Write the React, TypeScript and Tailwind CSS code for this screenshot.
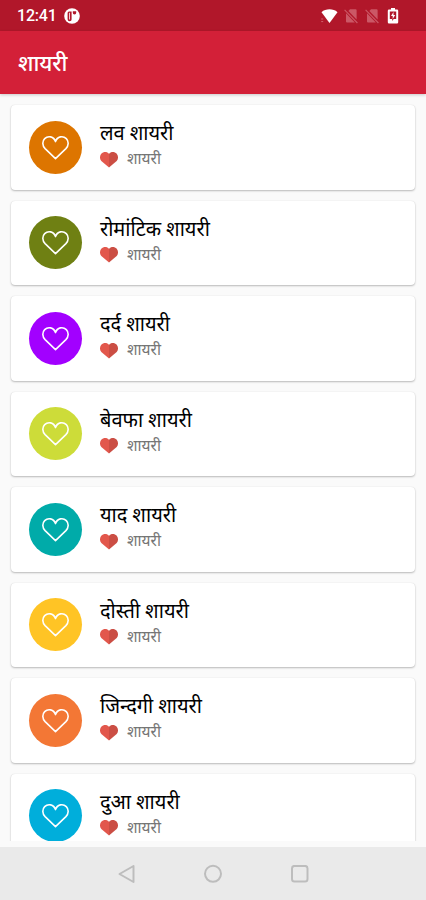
type Category = {
  id: number;
  name: string;
  color: string;
};

const CATEGORIES: Category[] = [
  { id: 1, name: "लव शायरी", color: "bg-[#dd7500]" },
  { id: 2, name: "रोमांटिक शायरी", color: "bg-[#6f8013]" },
  { id: 3, name: "दर्द शायरी", color: "bg-[#a200ff]" },
  { id: 4, name: "बेवफा शायरी", color: "bg-[#cddc39]" },
  { id: 5, name: "याद शायरी", color: "bg-[#00aba9]" },
  { id: 6, name: "दोस्ती शायरी", color: "bg-[#ffc425]" },
  { id: 7, name: "जिन्दगी शायरी", color: "bg-[#f37735]" },
  { id: 8, name: "दुआ शायरी", color: "bg-[#00aedb]" },
];

function HeartOutline() {
  return (
    <svg width="27" height="25" viewBox="0 0 27 25" fill="none" aria-hidden="true">
      <path
        d="M13.5 23.6 3.1 13.6C.2 10.6.1 6.3 2.7 3.6 5.9.4 11.8 1.2 13.5 6.6 15.2 1.2 21.1.4 24.3 3.6c2.6 2.7 2.5 7-.4 10L13.5 23.6Z"
        stroke="white"
        strokeWidth="1.6"
        strokeLinejoin="round"
      />
    </svg>
  );
}

function RedHeart() {
  return (
    <svg width="18" height="16" viewBox="0 0 18 16" aria-hidden="true">
      <path d="M9 15.6 1.3 9C-.5 7-.4 3.5 1.3 1.7 3.6-.6 7.3-.4 9 2Z" fill="#e2574c" />
      <path d="m9 15.6 7.7-6.6c1.8-2 1.7-5.5 0-7.3C14.4-.6 10.7-.4 9 2Z" fill="#cb4e44" />
    </svg>
  );
}

function NoSim() {
  return (
    <svg width="14" height="16" viewBox="0 0 14 16" aria-hidden="true">
      <path d="M6 1.2H11.6q1 0 1 1v9.2L4.4 3Z" fill="#cb5866" />
      <path d="M2 5.2 10.8 14.6H3q-1 0-1-1Z" fill="#cb5866" />
      <path d="m.6 1.9 12.8 13.1" stroke="#cb5866" strokeWidth="1.1" />
    </svg>
  );
}

function StatusBar() {
  return (
    <div className="flex h-[31px] shrink-0 items-center bg-[#b1172a] pl-[17px] pr-[27px] text-white">
      <span className="w-[47px] text-[16px] font-medium leading-none tracking-[-0.2px]">12:41</span>
      <svg width="16" height="16" viewBox="0 0 16 16" aria-hidden="true">
        <circle cx="8" cy="8" r="7.8" fill="white" />
        <path d="M3.6 5Q3.6 3.4 5 3.4h2.6v8.2q0 1.6-1.8 1.6-2.2 0-2.2-2Z" fill="#b1172a" />
        <path d="M5.2 4.8h.8v6.8h-.8Z" fill="white" />
        <path d="M8.8 3.3h3.4v1.5a1.7 1.7 0 0 1-3.4 0Z" fill="#b1172a" />
      </svg>
      <div className="ml-auto flex items-center">
        <svg className="mr-[6px]" width="18" height="16" viewBox="0 0 18 16" aria-hidden="true">
          <path d="M1.5 4.2C5.7.4 13.3.4 17.5 4.2L9.5 15Z" fill="white" />
          <path d="M1.2 11h2M1.2 13.6h2" stroke="#d0606e" strokeWidth="1" />
        </svg>
        <NoSim />
        <span className="w-[7px]" />
        <NoSim />
        <svg className="ml-[8px]" width="12" height="16" viewBox="0 0 12 16" aria-hidden="true">
          <path d="M4 0h4v1.5h2q1.2 0 1.2 1.2v11.6q0 1.3-1.2 1.3H2q-1.2 0-1.2-1.3V2.7Q.8 1.5 2 1.5h2Z" fill="white" />
          <path d="M2.8 3.5h6.4V11H2.8Z" fill="#b1172a" />
          <path d="M6.5 4 4 8h1.7v3L8.2 7H6.5Z" fill="white" />
          <path d="m5.2 11 1.5 0-1.5 2Z" fill="#b1172a" />
        </svg>
      </div>
    </div>
  );
}

function CategoryCard({ category }: { category: Category }) {
  return (
    <li className="flex h-[84.5px] shrink-0 items-center rounded-[4px] bg-white pb-[0.5px] pl-[18px] shadow-[0_1px_2px_rgba(0,0,0,0.25),0_0_1px_rgba(0,0,0,0.12)]">
      <div className={`flex size-[53px] shrink-0 items-center justify-center rounded-full ${category.color}`}>
        <HeartOutline />
      </div>
      <div className="ml-[18px] h-full pt-[12px]">
        <p className="h-[33px] whitespace-nowrap text-[20px] leading-[32px] text-black">{category.name}</p>
        <div className="flex h-[18px] items-start gap-[9px]">
          <span className="pt-[1.5px]">
            <RedHeart />
          </span>
          <span className="whitespace-nowrap text-[15.5px] leading-[18px] text-[#757575]">शायरी</span>
        </div>
      </div>
    </li>
  );
}

function NavigationBar() {
  return (
    <nav className="flex h-[53px] shrink-0 items-center justify-center gap-[68px] bg-[#eaeaea]">
      <svg width="18" height="20" viewBox="0 0 18 20" fill="none" aria-hidden="true">
        <path d="M16.5 2v16L2.5 10Z" stroke="#bdbdbd" strokeWidth="2" strokeLinejoin="round" />
      </svg>
      <svg width="20" height="20" viewBox="0 0 20 20" fill="none" aria-hidden="true">
        <circle cx="10" cy="9.8" r="8" stroke="#bdbdbd" strokeWidth="2" />
      </svg>
      <svg width="18" height="18" viewBox="0 0 18 18" fill="none" aria-hidden="true">
        <rect x="1" y="0.9" width="15.5" height="15.5" rx="2.5" stroke="#bdbdbd" strokeWidth="2" />
      </svg>
    </nav>
  );
}

export default function App() {
  return (
    <main className="flex h-[900px] w-[426px] flex-col overflow-hidden bg-[#fafafa] font-[Roboto,'Noto_Sans_Devanagari','Noto_Sans',sans-serif]">
      <StatusBar />
      <header className="z-10 flex h-[63px] shrink-0 items-center bg-[#d32038] pl-[18px] pt-[2px] shadow-[0_1px_3px_rgba(0,0,0,0.2)]">
        <h1 className="text-[22px] font-medium leading-[32px] tracking-[-0.1px] text-white">शायरी</h1>
      </header>
      <ul className="flex h-[747px] shrink-0 flex-col gap-[11px] overflow-hidden px-[11px] pt-[11px]">
        {CATEGORIES.map((category) => (
          <CategoryCard key={category.id} category={category} />
        ))}
      </ul>
      <div className="h-[6px] shrink-0" />
      <NavigationBar />
    </main>
  );
}
